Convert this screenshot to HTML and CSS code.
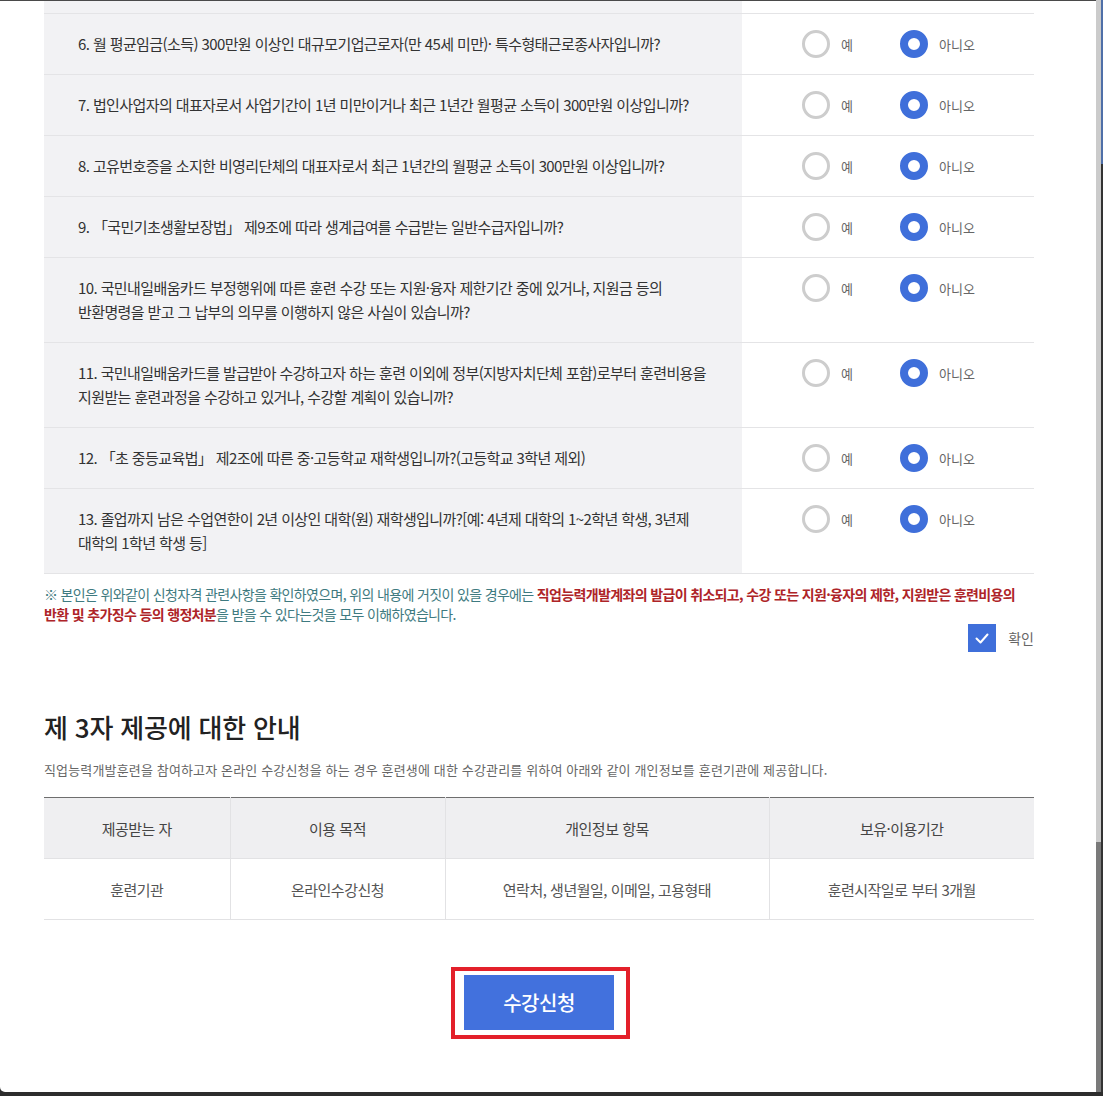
FILE: index.html
```html
<!DOCTYPE html>
<html lang="ko">
<head>
    <meta charset="UTF-8">
    <meta name="viewport" content="width=device-width, initial-scale=1.0">
    <title>수강신청 자격 확인</title>
    <link rel="stylesheet" href="styles.css">
</head>
<body>
    <div class="window">
        <div class="modal">
            <div class="qlist">
                <div class="qrow qrow-cut">
                    <div class="q"></div>
                    <div class="a"></div>
                </div>
                <div class="qrow">
                    <div class="q">6. 월 평균임금(소득) 300만원 이상인 대규모기업근로자(만 45세 미만)· 특수형태근로종사자입니까?</div>
                    <div class="a">
                        <label class="opt"><span class="radio"></span>예</label>
                        <label class="opt"><span class="radio on"></span>아니오</label>
                    </div>
                </div>
                <div class="qrow">
                    <div class="q">7. 법인사업자의 대표자로서 사업기간이 1년 미만이거나 최근 1년간 월평균 소득이 300만원 이상입니까?</div>
                    <div class="a">
                        <label class="opt"><span class="radio"></span>예</label>
                        <label class="opt"><span class="radio on"></span>아니오</label>
                    </div>
                </div>
                <div class="qrow">
                    <div class="q">8. 고유번호증을 소지한 비영리단체의 대표자로서 최근 1년간의 월평균 소득이 300만원 이상입니까?</div>
                    <div class="a">
                        <label class="opt"><span class="radio"></span>예</label>
                        <label class="opt"><span class="radio on"></span>아니오</label>
                    </div>
                </div>
                <div class="qrow">
                    <div class="q">9. 「국민기초생활보장법」 제9조에 따라 생계급여를 수급받는 일반수급자입니까?</div>
                    <div class="a">
                        <label class="opt"><span class="radio"></span>예</label>
                        <label class="opt"><span class="radio on"></span>아니오</label>
                    </div>
                </div>
                <div class="qrow">
                    <div class="q">10. 국민내일배움카드 부정행위에 따른 훈련 수강 또는 지원·융자 제한기간 중에 있거나, 지원금 등의<br>반환명령을 받고 그 납부의 의무를 이행하지 않은 사실이 있습니까?</div>
                    <div class="a">
                        <label class="opt"><span class="radio"></span>예</label>
                        <label class="opt"><span class="radio on"></span>아니오</label>
                    </div>
                </div>
                <div class="qrow">
                    <div class="q">11. 국민내일배움카드를 발급받아 수강하고자 하는 훈련 이외에 정부(지방자치단체 포함)로부터 훈련비용을<br>지원받는 훈련과정을 수강하고 있거나, 수강할 계획이 있습니까?</div>
                    <div class="a">
                        <label class="opt"><span class="radio"></span>예</label>
                        <label class="opt"><span class="radio on"></span>아니오</label>
                    </div>
                </div>
                <div class="qrow">
                    <div class="q">12. 「초 중등교육법」 제2조에 따른 중·고등학교 재학생입니까?(고등학교 3학년 제외)</div>
                    <div class="a">
                        <label class="opt"><span class="radio"></span>예</label>
                        <label class="opt"><span class="radio on"></span>아니오</label>
                    </div>
                </div>
                <div class="qrow">
                    <div class="q">13. 졸업까지 남은 수업연한이 2년 이상인 대학(원) 재학생입니까?[예: 4년제 대학의 1~2학년 학생, 3년제<br>대학의 1학년 학생 등]</div>
                    <div class="a">
                        <label class="opt"><span class="radio"></span>예</label>
                        <label class="opt"><span class="radio on"></span>아니오</label>
                    </div>
                </div>
            </div>

            <p class="notice">※ 본인은 위와같이 신청자격 관련사항을 확인하였으며, 위의 내용에 거짓이 있을 경우에는 <strong>직업능력개발계좌의 발급이 취소되고, 수강 또는 지원·융자의 제한, 지원받은 훈련비용의<br>반환 및 추가징수 등의 행정처분</strong>을 받을 수 있다는것을 모두 이해하였습니다.</p>

            <label class="agree">
                <span class="check">
                    <svg width="28" height="28" viewBox="0 0 28 28" fill="none" stroke="#fff" stroke-width="2" stroke-linecap="round" stroke-linejoin="round"><polyline points="8.5,14.5 12.5,18.5 19.5,10.5"/></svg>
                </span>
                확인
            </label>

            <h2 class="sec-title">제 3자 제공에 대한 안내</h2>
            <p class="sec-desc">직업능력개발훈련을 참여하고자 온라인 수강신청을 하는 경우 훈련생에 대한 수강관리를 위하여 아래와 같이 개인정보를 훈련기관에 제공합니다.</p>

            <table class="info">
                <colgroup>
                    <col style="width: 186px">
                    <col style="width: 215px">
                    <col style="width: 324px">
                    <col>
                </colgroup>
                <thead>
                    <tr>
                        <th>제공받는 자</th>
                        <th>이용 목적</th>
                        <th>개인정보 항목</th>
                        <th>보유·이용기간</th>
                    </tr>
                </thead>
                <tbody>
                    <tr>
                        <td>훈련기관</td>
                        <td>온라인수강신청</td>
                        <td>연락처, 생년월일, 이메일, 고용형태</td>
                        <td>훈련시작일로 부터 3개월</td>
                    </tr>
                </tbody>
            </table>

            <div class="submit">
                <span class="highlight"><button class="btn-apply">수강신청</button></span>
            </div>
        </div>
        <div class="scrollbar"><div class="thumb"></div></div>
        <div class="backdrop"></div>
    </div>
</body>
</html>
```

FILE: styles.css
```css
* {
    box-sizing: border-box;
}
body {
    margin: 0;
    background-color: #2d2d2d;
    font-family: "Noto Sans CJK KR", "Noto Sans", sans-serif;
    color: #333;
}
.window {
    display: flex;
    height: 1092px;
}
.modal {
    flex: 1;
    background: #ffffff;
    border-top: 1px solid #4a4a4a;
    border-bottom-left-radius: 5px;
    padding: 0 62px 0 44px;
    overflow: hidden;
}

/* 자격 확인 문항 */
.qrow {
    display: grid;
    grid-template-columns: 698px 1fr;
    border-bottom: 1px solid #e4e4e6;
}
.qrow .q {
    background-color: #f2f2f4;
    padding: 18px 20px 18px 34px;
    font-size: 15px;
    line-height: 24px;
    letter-spacing: -0.6px;
    color: #333;
}
.qrow .a {
    display: flex;
    align-items: flex-start;
    padding: 16px 0 0 60px;
}
.qrow.qrow-cut .q,
.qrow.qrow-cut .a {
    height: 12px;
    padding: 0;
}
.opt {
    display: flex;
    align-items: center;
    gap: 11px;
    width: 98px;
    height: 28px;
    font-size: 13px;
    color: #666;
}
.radio {
    width: 28px;
    height: 28px;
    border: 3px solid #cdcdcd;
    border-radius: 50%;
    background: #fff;
}
.radio.on {
    border: 8px solid #3f6fda;
}

/* 동의 */
.notice {
    margin: 10px 0 0;
    font-size: 14px;
    line-height: 20px;
    letter-spacing: -0.65px;
    color: #3e7a80;
}
.notice strong {
    color: #ae2428;
}
.agree {
    display: flex;
    justify-content: flex-end;
    align-items: center;
    gap: 12px;
    margin-top: 0;
    font-size: 14px;
    color: #666;
}
.check {
    display: block;
    width: 28px;
    height: 28px;
    background-color: #3f6fda;
}
.check svg {
    display: block;
}

/* 제3자 제공 안내 */
.sec-title {
    margin: 58px 0 0;
    font-size: 26px;
    line-height: 34px;
    font-weight: 500;
    letter-spacing: -0.2px;
    color: #222;
}
.sec-desc {
    margin: 16px 0 0;
    font-size: 13px;
    line-height: 20px;
    letter-spacing: 0.15px;
    color: #666;
}
.info {
    width: 100%;
    margin-top: 17px;
    border-collapse: collapse;
    border-top: 1px solid #6e6e6e;
    table-layout: fixed;
}
.info th,
.info td {
    height: 61px;
    padding: 0;
    text-align: center;
    font-size: 15px;
    letter-spacing: -0.5px;
    border-bottom: 1px solid #e2e2e4;
    border-left: 1px solid #e2e2e4;
}
.info th:first-child,
.info td:first-child {
    border-left: none;
}
.info th {
    background-color: #efeff1;
    font-weight: 400;
    color: #444;
}
.info td {
    color: #555;
}

/* 신청 버튼 */
.submit {
    display: flex;
    justify-content: center;
    margin-top: 47px;
    padding-left: 3px;
}
.highlight {
    display: inline-block;
    border: 4px solid #e3202a;
    padding: 4px 12px 5px 9px;
}
.btn-apply {
    display: block;
    width: 150px;
    height: 55px;
    border: none;
    background-color: #4271dd;
    color: #fff;
    font-family: inherit;
    font-size: 20px;
    font-weight: 500;
    letter-spacing: -0.5px;
    cursor: pointer;
}

/* 스크롤바 */
.scrollbar {
    width: 5px;
    display: flex;
    flex-direction: column;
    background-color: #cbcbcb;
}
.scrollbar .thumb {
    margin-top: auto;
    height: 250px;
    background-color: #7a7a7a;
}
.backdrop {
    width: 2px;
    background: linear-gradient(#4f6fa8 0, #4f6fa8 164px, #333 164px);
}
```
